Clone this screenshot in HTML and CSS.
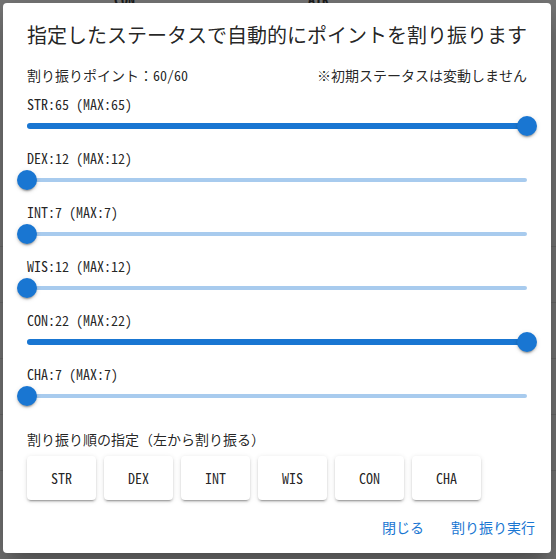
FILE: index.html
```html
<!DOCTYPE html>
<html lang="ja">
<head>
<meta charset="utf-8">
<title>ポイント割り振り</title>
<link rel="stylesheet" href="styles.css">
</head>
<body>
<div class="page">
  <div class="bg-head"><span class="bg-col1">CON</span><span class="bg-col2">ATR</span></div>
  <div class="bg-rows">
    <div class="bg-row"></div>
    <div class="bg-row"></div>
    <div class="bg-row"></div>
    <div class="bg-row"></div>
    <div class="bg-row"></div>
  </div>
</div>

<div class="dialog" role="dialog">
  <h2 class="title">指定したステータスで自動的にポイントを割り振ります</h2>
  <div class="content">
    <div class="info">
      <span>割り振りポイント：60/60</span>
      <span>※初期ステータスは変動しません</span>
    </div>

    <div class="stat">
      <div class="label">STR:65 (MAX:65)</div>
      <div class="slider"><div class="rail"><div class="track" style="width:100%"></div></div><span class="thumb" style="left:100%"></span></div>
    </div>
    <div class="stat">
      <div class="label">DEX:12 (MAX:12)</div>
      <div class="slider"><div class="rail"><div class="track" style="width:0%"></div></div><span class="thumb" style="left:0%"></span></div>
    </div>
    <div class="stat">
      <div class="label">INT:7 (MAX:7)</div>
      <div class="slider"><div class="rail"><div class="track" style="width:0%"></div></div><span class="thumb" style="left:0%"></span></div>
    </div>
    <div class="stat">
      <div class="label">WIS:12 (MAX:12)</div>
      <div class="slider"><div class="rail"><div class="track" style="width:0%"></div></div><span class="thumb" style="left:0%"></span></div>
    </div>
    <div class="stat">
      <div class="label">CON:22 (MAX:22)</div>
      <div class="slider"><div class="rail"><div class="track" style="width:100%"></div></div><span class="thumb" style="left:100%"></span></div>
    </div>
    <div class="stat">
      <div class="label">CHA:7 (MAX:7)</div>
      <div class="slider"><div class="rail"><div class="track" style="width:0%"></div></div><span class="thumb" style="left:0%"></span></div>
    </div>

    <div class="order-label">割り振り順の指定（左から割り振る）</div>
    <div class="order">
      <button class="chip">STR</button>
      <button class="chip">DEX</button>
      <button class="chip">INT</button>
      <button class="chip">WIS</button>
      <button class="chip">CON</button>
      <button class="chip">CHA</button>
    </div>
  </div>
  <div class="actions">
    <button class="text-btn">閉じる</button>
    <button class="text-btn">割り振り実行</button>
  </div>
</div>
</body>
</html>
```

FILE: styles.css
```css
html, body {
  margin: 0;
  padding: 0;
}

body {
  width: 556px;
  height: 559px;
  overflow: hidden;
  background: #777777;
  font-family: "Noto Sans Mono CJK JP", "Noto Sans CJK JP", "DejaVu Sans Mono", monospace;
  color: rgba(0, 0, 0, 0.87);
}

/* dimmed page behind the dialog */
.page {
  height: 559px;
  overflow: hidden;
  display: flex;
  flex-direction: column;
}

.bg-head {
  display: flex;
  height: 6px;
  overflow: hidden;
  font-size: 14px;
  font-weight: 700;
  line-height: 6px;
  color: #1e1e1e;
}

.bg-head span {
  display: block;
  margin-top: -4px;
}

.bg-col1 {
  margin-left: 114px;
}

.bg-col2 {
  margin-left: 173px;
}

.bg-rows {
  display: flex;
  flex-direction: column;
  padding-top: 240px;
}

.bg-row {
  height: 55px;
  border-top: 1px solid #6b6b6b;
}

/* dialog */
.dialog {
  position: absolute;
  left: 3px;
  top: 3px;
  width: 548px;
  background: #ffffff;
  border-radius: 4px;
  box-shadow: 0px 11px 15px -7px rgba(0, 0, 0, 0.2),
              0px 24px 38px 3px rgba(0, 0, 0, 0.14),
              0px 9px 46px 8px rgba(0, 0, 0, 0.12);
  display: flex;
  flex-direction: column;
}

.title {
  margin: 0;
  padding: 16px 24px 0;
  font-size: 20px;
  font-weight: 500;
  line-height: 32px;
  color: rgba(0, 0, 0, 0.87);
}

.content {
  padding: 0 24px;
  display: flex;
  flex-direction: column;
}

.info {
  display: flex;
  justify-content: space-between;
  margin-top: 14px;
  margin-bottom: 9px;
  font-size: 14px;
  line-height: 20px;
}

.stat {
  display: flex;
  flex-direction: column;
  margin-bottom: 10px;
}

.label {
  font-size: 14px;
  line-height: 20px;
}

.slider {
  position: relative;
  height: 24px;
  display: flex;
  align-items: center;
}

.rail {
  flex: 1;
  height: 4px;
  border-radius: 2px;
  background: #a8cbee;
  display: flex;
  align-items: center;
}

.track {
  height: 6px;
  border-radius: 3px;
  background: #1976d2;
}

.thumb {
  position: absolute;
  top: 50%;
  width: 20px;
  height: 20px;
  border-radius: 50%;
  background: #1976d2;
  transform: translate(-50%, -50%);
  box-shadow: 0px 3px 1px -2px rgba(0, 0, 0, 0.2),
              0px 2px 2px 0px rgba(0, 0, 0, 0.14),
              0px 1px 5px 0px rgba(0, 0, 0, 0.12);
}

.order-label {
  margin-top: 11px;
  font-size: 14px;
  line-height: 20px;
}

.order {
  display: flex;
  gap: 8px;
  margin-top: 7px;
}

.chip {
  width: 69px;
  height: 44px;
  border: none;
  border-radius: 4px;
  background: #ffffff;
  font-family: inherit;
  font-size: 14px;
  color: rgba(0, 0, 0, 0.87);
  box-shadow: 0px 3px 1px -2px rgba(0, 0, 0, 0.2),
              0px 2px 2px 0px rgba(0, 0, 0, 0.14),
              0px 1px 5px 0px rgba(0, 0, 0, 0.12);
  padding: 0;
}

.actions {
  display: flex;
  justify-content: flex-end;
  gap: 8px;
  padding: 8px;
  margin-top: 1px;
}

.text-btn {
  min-width: 64px;
  height: 36px;
  padding: 6px 8px;
  border: none;
  background: transparent;
  border-radius: 4px;
  font-family: inherit;
  font-size: 14px;
  font-weight: 500;
  line-height: 24px;
  color: #1976d2;
}
```
